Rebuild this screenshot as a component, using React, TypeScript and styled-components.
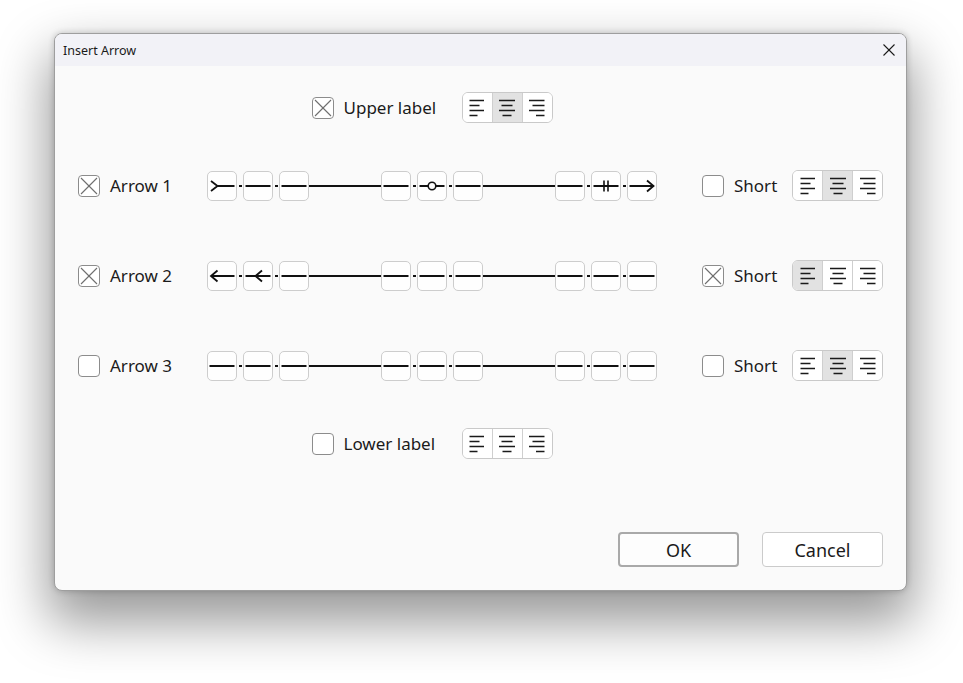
import React from "react";
import styled, { createGlobalStyle } from "styled-components";

const GlobalStyle = createGlobalStyle`
  html, body {
    margin: 0;
    padding: 0;
    background: #ffffff;
  }
  body {
    font-family: "Noto Sans", "Open Sans", sans-serif;
    color: #1b1b1b;
  }
`;

const Page = styled.div`
  width: 963px;
  height: 683px;
  box-sizing: border-box;
  padding: 33px 0 0 54px;
  overflow: hidden;
`;

const Dialog = styled.div`
  width: 853px;
  height: 558px;
  box-sizing: border-box;
  display: flex;
  flex-direction: column;
  background: #fafafa;
  border: 1px solid #9e9e9e;
  border-radius: 8px;
  overflow: hidden;
  box-shadow: 0 0 6px rgba(0, 0, 0, 0.2), 0 26px 52px 6px rgba(0, 0, 0, 0.4);
`;

const TitleBar = styled.div`
  height: 32px;
  flex: none;
  display: flex;
  align-items: center;
  justify-content: space-between;
  padding: 0 10px 0 8px;
  background: #f2f2f7;
  font-size: 12.5px;
  color: #1a1a1a;
`;

const CloseButton = styled.button`
  width: 14px;
  height: 14px;
  padding: 0;
  border: none;
  background: transparent;
  display: flex;
  align-items: center;
  justify-content: center;
`;

const Body = styled.div`
  flex: 1;
  display: flex;
  flex-direction: column;
  padding: 26px 23px 23px;
`;

const Row = styled.div<{ $top?: number }>`
  display: grid;
  grid-template-columns: 129px 450px 1fr;
  align-items: center;
  margin-top: ${(p) => p.$top ?? 0}px;
`;

const LabelGroup = styled.div`
  grid-column: 2;
  justify-self: center;
  display: grid;
  grid-template-columns: 22px 108px 91px;
  column-gap: 10px;
  align-items: center;
`;

const Text = styled.span`
  font-size: 17px;
  line-height: 22px;
  white-space: nowrap;
`;

const LeadCell = styled.div`
  display: flex;
  align-items: center;
  gap: 10px;
`;

const TailCell = styled.div`
  display: flex;
  align-items: center;
  gap: 10px;
  padding-left: 45px;
`;

const Push = styled.div`
  margin-left: auto;
`;

const Box = styled.span`
  width: 22px;
  height: 22px;
  box-sizing: border-box;
  border: 1px solid #8c8c8c;
  border-radius: 4px;
  background: #ffffff;
  display: flex;
  align-items: center;
  justify-content: center;
  flex: none;
`;

const AlignGroup = styled.div`
  width: 91px;
  height: 31px;
  box-sizing: border-box;
  display: flex;
  border: 1px solid #c9c9c9;
  border-radius: 6px;
  overflow: hidden;
  background: #ffffff;
`;

const AlignButton = styled.div<{ $on: boolean }>`
  flex: 1;
  display: flex;
  align-items: center;
  justify-content: center;
  background: ${(p) => (p.$on ? "#e2e2e2" : "#ffffff")};
  & + & {
    border-left: 1px solid #cfcfcf;
  }
`;

const Strip = styled.div`
  display: flex;
  align-items: center;
  width: 450px;
`;

const CellGroup = styled.div`
  display: flex;
  align-items: center;
`;

const Cell = styled.div`
  width: 30px;
  height: 30px;
  box-sizing: border-box;
  border: 1px solid #cdcdcd;
  border-radius: 5px;
  background: #fefefe;
  display: flex;
  flex: none;
`;

const Dash = styled.div`
  width: 6px;
  display: flex;
  justify-content: center;
  &::before {
    content: "";
    width: 3px;
    height: 2px;
    background: #111;
  }
`;

const Connector = styled.div`
  flex: 1;
  height: 2px;
  background: #111;
`;

const ButtonRow = styled.div`
  margin-top: auto;
  display: flex;
  justify-content: flex-end;
  gap: 23px;
`;

const Button = styled.button<{ $default?: boolean }>`
  width: 121px;
  height: 35px;
  box-sizing: border-box;
  border-radius: 4px;
  font-family: "Noto Sans", "Open Sans", sans-serif;
  font-size: 18px;
  color: #1a1a1a;
  background: ${(p) => (p.$default ? "#fdfdfd" : "#ffffff")};
  border: ${(p) => (p.$default ? "2px solid #a9a9a9" : "1px solid #cbcbcb")};
  padding: 0;
`;

type Kind = "plain" | "tail" | "arrowR" | "arrowL" | "midL" | "circle" | "bars";

const S = { stroke: "#111", strokeWidth: 2, fill: "none", strokeLinecap: "butt" as const };
const H = { stroke: "#111", strokeWidth: 1.8, fill: "none", strokeLinejoin: "miter" as const };

function CellIcon({ kind }: { kind: Kind }) {
  return (
    <svg width="28" height="28" viewBox="0 0 28 28">
      {kind === "plain" && <line x1="1.5" y1="14" x2="26.5" y2="14" {...S} />}
      {kind === "tail" && (
        <>
          <polyline points="3,9 9.5,14 3,19" {...H} />
          <line x1="9" y1="14" x2="26.5" y2="14" {...S} />
        </>
      )}
      {kind === "arrowR" && (
        <>
          <line x1="1.5" y1="14" x2="25" y2="14" {...S} />
          <polyline points="19,8.5 25.5,14 19,19.5" {...H} />
        </>
      )}
      {kind === "arrowL" && (
        <>
          <line x1="3" y1="14" x2="26.5" y2="14" {...S} />
          <polyline points="9.5,8.5 3,14 9.5,19.5" {...H} />
        </>
      )}
      {kind === "midL" && (
        <>
          <line x1="1.5" y1="14" x2="26.5" y2="14" {...S} />
          <polyline points="18,8.5 11.5,14 18,19.5" {...H} />
        </>
      )}
      {kind === "circle" && (
        <>
          <line x1="1.5" y1="14" x2="10.2" y2="14" {...S} />
          <circle cx="14" cy="14" r="3.8" stroke="#111" strokeWidth="1.6" fill="none" />
          <line x1="17.8" y1="14" x2="26.5" y2="14" {...S} />
        </>
      )}
      {kind === "bars" && (
        <>
          <line x1="1.5" y1="14" x2="26.5" y2="14" {...S} />
          <line x1="12" y1="8.5" x2="12" y2="19.5" stroke="#111" strokeWidth="1.6" />
          <line x1="16" y1="8.5" x2="16" y2="19.5" stroke="#111" strokeWidth="1.6" />
        </>
      )}
    </svg>
  );
}

function Check({ checked }: { checked: boolean }) {
  return (
    <Box>
      {checked && (
        <svg width="20" height="20" viewBox="0 0 20 20">
          <line x1="2" y1="2" x2="18" y2="18" stroke="#6e6e6e" strokeWidth="1.1" />
          <line x1="18" y1="2" x2="2" y2="18" stroke="#6e6e6e" strokeWidth="1.1" />
        </svg>
      )}
    </Box>
  );
}

const alignLines: Record<string, [number, number][]> = {
  left: [
    [0.5, 15],
    [0.5, 10.5],
    [0.5, 15],
    [0.5, 8.5],
  ],
  center: [
    [0, 16],
    [2.5, 13.5],
    [0, 16],
    [3.5, 12.5],
  ],
  right: [
    [0, 15.5],
    [3.5, 15.5],
    [0, 15.5],
    [7, 15.5],
  ],
};

function AlignIcon({ side }: { side: "left" | "center" | "right" }) {
  return (
    <svg width="16" height="18" viewBox="0 0 16 18">
      {alignLines[side].map(([a, b], i) => (
        <line key={i} x1={a} y1={1.5 + i * 5} x2={b} y2={1.5 + i * 5} stroke="#1a1a1a" strokeWidth="1.6" />
      ))}
    </svg>
  );
}

function Alignment({ selected }: { selected?: "left" | "center" | "right" }) {
  const sides: ("left" | "center" | "right")[] = ["left", "center", "right"];
  return (
    <AlignGroup>
      {sides.map((s) => (
        <AlignButton key={s} $on={selected === s}>
          <AlignIcon side={s} />
        </AlignButton>
      ))}
    </AlignGroup>
  );
}

function ArrowStrip({ cells }: { cells: Kind[] }) {
  const groups = [cells.slice(0, 3), cells.slice(3, 6), cells.slice(6, 9)];
  return (
    <Strip>
      {groups.map((g, gi) => (
        <React.Fragment key={gi}>
          {gi > 0 && <Connector />}
          <CellGroup>
            {g.map((k, i) => (
              <React.Fragment key={i}>
                {i > 0 && <Dash />}
                <Cell>
                  <CellIcon kind={k} />
                </Cell>
              </React.Fragment>
            ))}
          </CellGroup>
        </React.Fragment>
      ))}
    </Strip>
  );
}

const arrows: {
  name: string;
  on: boolean;
  short: boolean;
  align: "left" | "center" | "right";
  cells: Kind[];
}[] = [
  {
    name: "Arrow 1",
    on: true,
    short: false,
    align: "center",
    cells: ["tail", "plain", "plain", "plain", "circle", "plain", "plain", "bars", "arrowR"],
  },
  {
    name: "Arrow 2",
    on: true,
    short: true,
    align: "left",
    cells: ["arrowL", "midL", "plain", "plain", "plain", "plain", "plain", "plain", "plain"],
  },
  {
    name: "Arrow 3",
    on: false,
    short: false,
    align: "center",
    cells: ["plain", "plain", "plain", "plain", "plain", "plain", "plain", "plain", "plain"],
  },
];

export default function App() {
  return (
    <>
      <GlobalStyle />
      <Page>
        <Dialog>
          <TitleBar>
            <span>Insert Arrow</span>
            <CloseButton aria-label="Close">
              <svg width="12" height="12" viewBox="0 0 12 12">
                <line x1="0.5" y1="0.5" x2="11.5" y2="11.5" stroke="#1a1a1a" strokeWidth="1.1" />
                <line x1="11.5" y1="0.5" x2="0.5" y2="11.5" stroke="#1a1a1a" strokeWidth="1.1" />
              </svg>
            </CloseButton>
          </TitleBar>
          <Body>
            <Row>
              <LabelGroup>
                <Check checked />
                <Text>Upper label</Text>
                <Alignment selected="center" />
              </LabelGroup>
            </Row>

            {arrows.map((a, i) => (
              <Row key={a.name} $top={i === 0 ? 47 : 59}>
                <LeadCell>
                  <Check checked={a.on} />
                  <Text>{a.name}</Text>
                </LeadCell>
                <ArrowStrip cells={a.cells} />
                <TailCell>
                  <Check checked={a.short} />
                  <Text>Short</Text>
                  <Push>
                    <Alignment selected={a.align} />
                  </Push>
                </TailCell>
              </Row>
            ))}

            <Row $top={47}>
              <LabelGroup>
                <Check checked={false} />
                <Text>Lower label</Text>
                <Alignment />
              </LabelGroup>
            </Row>

            <ButtonRow>
              <Button $default>OK</Button>
              <Button>Cancel</Button>
            </ButtonRow>
          </Body>
        </Dialog>
      </Page>
    </>
  );
}
